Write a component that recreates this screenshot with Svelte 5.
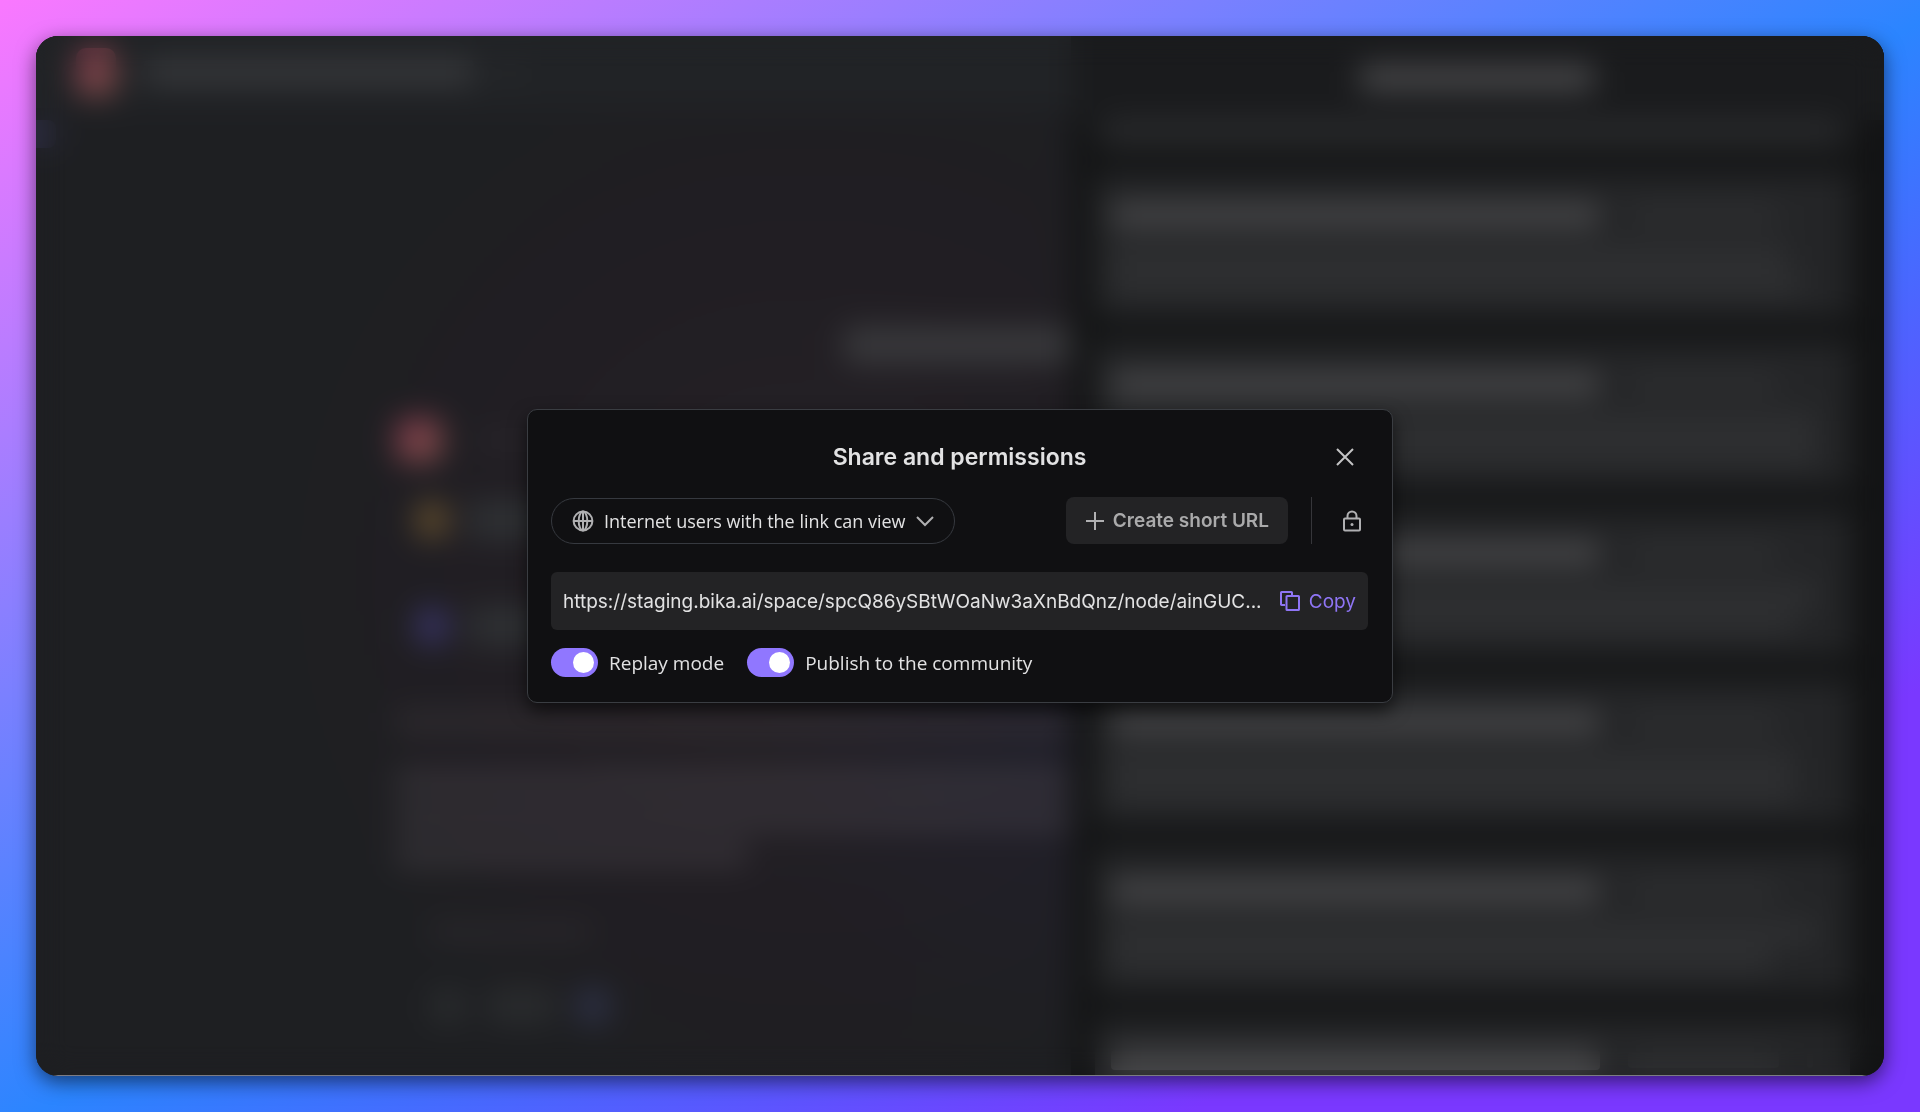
<script>
  let access = $state('public');
  let replayMode = $state(true);
  let published = $state(true);

  const url =
    'https://staging.bika.ai/space/spcQ86ySBtWOaNw3aXnBdQnz/node/ainGUC...';

  // widths of the two preview lines of each history card
  const cards = [
    [94, 96],
    [98, 98],
    [98, 95],
    [95, 95],
    [98, 92],
    [96, 94],
  ];
</script>

<div class="page">
  <div class="window">
    <div class="app" aria-hidden="true">
      <section class="chat">
        <header class="chat-header">
          <span class="avatar"></span>
          <span class="bar heading"></span>
          <span class="bar tiny"></span>
        </header>
        <span class="marker"></span>
        <div class="bubble"></div>
        <div class="thread">
          <div class="row"><span class="avatar large"></span><span class="bar name"></span></div>
          <div class="row step"><span class="dot gold"></span><span class="chip"></span></div>
          <div class="row step second"><span class="dot blue"></span><span class="chip"></span></div>
          <div class="line first"></div>
          <div class="line"></div>
          <div class="line"></div>
          <div class="line short"></div>
          <div class="composer">
            <span class="bar hint"></span>
            <div class="tools">
              <span></span><span class="wide"></span><span class="send"></span>
            </div>
          </div>
        </div>
      </section>
      <aside class="history">
        <div class="history-title"><span class="bar"></span></div>
        <div class="cards">
          <div class="card tail"><span class="preview"></span></div>
          {#each cards as [first, second]}
            <div class="card">
              <div class="card-head">
                <span class="bar title"></span>
                <span class="bar date"></span>
                <span class="bar more"></span>
              </div>
              <span class="preview" style="width: {first}%"></span>
              <span class="preview" style="width: {second}%"></span>
            </div>
          {/each}
        </div>
      </aside>
    </div>

    <div class="overlay">
      <div class="dialog" role="dialog" aria-modal="true" aria-labelledby="share-title">
        <div class="dialog-header">
          <h2 id="share-title">Share and permissions</h2>
          <button class="icon-button close" aria-label="Close">
            <svg width="18" height="18" viewBox="0 0 18 18">
              <path d="M1 1l16 16M17 1L1 17" />
            </svg>
          </button>
        </div>

        <div class="access-row">
          <div class="access">
            <svg width="22" height="22" viewBox="0 0 22 22">
              <circle cx="11" cy="11" r="9.4" />
              <ellipse cx="11" cy="11" rx="4.3" ry="9.4" />
              <path d="M1.6 11h18.8M11 1.6v18.8" />
            </svg>
            <select bind:value={access} aria-label="Who can view">
              <option value="public">Internet users with the link can view</option>
            </select>
            <svg class="chevron" width="18" height="12" viewBox="0 0 18 12">
              <path d="M1 2l8 8 8-8" />
            </svg>
          </div>
          <div class="actions">
            <button class="create">
              <svg width="20" height="20" viewBox="0 0 20 20">
                <path d="M10 1v18M1 10h18" />
              </svg>
              Create short URL
            </button>
            <span class="divider"></span>
            <button class="icon-button lock" aria-label="Password">
              <svg width="20" height="22" viewBox="0 0 20 22">
                <rect x="2" y="8.5" width="16" height="12" rx="1" />
                <path d="M5.5 8.5V6a4.5 4.5 0 0 1 9 0v2.5" />
                <circle class="keyhole" cx="10" cy="14.5" r="1.5" />
              </svg>
            </button>
          </div>
        </div>

        <div class="link-box">
          <input type="text" readonly value={url} aria-label="Share link" />
          <button class="copy">
            <svg width="22" height="22" viewBox="0 0 22 22">
              <path d="M6 15H2.6a.6.6 0 0 1-.6-.6V2.6a.6.6 0 0 1 .6-.6h9.8a.6.6 0 0 1 .6.6V5" />
              <rect x="7.5" y="6" width="12.5" height="14" rx=".6" />
            </svg>
            Copy
          </button>
        </div>

        <div class="switches">
          <label><input type="checkbox" bind:checked={replayMode} />Replay mode</label>
          <label><input type="checkbox" bind:checked={published} />Publish to the community</label>
        </div>
      </div>
    </div>
  </div>
</div>

<style>
  .page {
    display: flex;
    min-height: 100vh;
    box-sizing: border-box;
    padding: 36px;
    background: linear-gradient(to bottom right, #fa78ff, #2b85ff 51%, #7a38ff 81%);
    font-family: Inter, sans-serif;
    color: #e2e2e3;
  }

  .window {
    position: relative;
    display: flex;
    flex: 1;
    overflow: hidden;
    border-radius: 22px;
    background: #1e1f22;
    box-shadow: 0 6px 20px rgba(0, 0, 0, 0.55);
    /* keeps the page gradient out of the overlay's backdrop blur */
    will-change: opacity;
  }

  .app {
    display: flex;
    flex: 1;
    max-height: calc(100vh - 72px);
    overflow: hidden;
  }

  .bar {
    display: block;
    height: 16px;
    border-radius: 4px;
    background: #404043;
  }

  .chat {
    flex: 56 1 0;
    overflow: hidden;
    background:
      radial-gradient(circle at 100% 66%, rgba(32, 34, 52, 0.45), transparent 26%),
      radial-gradient(circle at 75% 52%, #262227, #211e23 35%, #1e1f22 58%);
  }

  .chat-header {
    display: flex;
    align-items: center;
    gap: 28px;
    height: 72px;
    padding-left: 40px;
    background: #212326;
  }

  .avatar {
    width: 40px;
    height: 48px;
    border-radius: 10px;
    background: linear-gradient(135deg, #793349, #7c5148);
  }

  .heading {
    width: 330px;
    height: 24px;
    background: #38393c;
  }

  .tiny {
    width: 16px;
    background: #2b2d2f;
  }

  .marker {
    display: block;
    width: 20px;
    height: 28px;
    margin-top: 12px;
    border-radius: 0 8px 8px 0;
    background: #2c2c40;
  }

  .bubble {
    width: 22%;
    height: 38px;
    margin: 178px 0 0 auto;
    border-radius: 10px 0 0 10px;
    background: #38383b;
  }

  .thread {
    padding: 54px 0 0 360px;
  }

  .row {
    display: flex;
    align-items: center;
    gap: 36px;
    height: 44px;
  }

  .large {
    width: 46px;
    height: 44px;
  }

  .name {
    width: 90px;
    background: #29262b;
  }

  .step {
    gap: 20px;
    padding-left: 20px;
    margin-top: 36px;
  }

  .second {
    margin-top: 62px;
  }

  .dot {
    width: 32px;
    height: 36px;
    border-radius: 10px;
  }

  .gold {
    background: #5f4b2d;
  }

  .blue {
    background: #373363;
  }

  .chip {
    width: 230px;
    height: 40px;
    background: #2e3033;
  }

  .line {
    height: 24px;
    margin-bottom: 12px;
    background: rgba(110, 104, 112, 0.25);
  }

  .first {
    margin: 62px 0 36px;
    background: rgba(100, 88, 92, 0.2);
  }

  .short {
    width: 52%;
  }

  .composer {
    padding: 46px 0 0 34px;
  }

  .hint {
    width: 160px;
    background: #2a282c;
  }

  .tools {
    display: flex;
    gap: 20px;
    margin-top: 48px;
  }

  .tools span {
    width: 36px;
    height: 36px;
    border-radius: 12px;
    background: #292b2d;
  }

  .tools .wide {
    width: 70px;
  }

  .tools .send {
    width: 34px;
    background: #2c3044;
  }

  .history {
    flex: 44 1 0;
    display: flex;
    flex-direction: column;
    overflow: hidden;
    background: #131415;
  }

  .history-title {
    display: flex;
    justify-content: center;
    align-items: center;
    flex: none;
    height: 84px;
    background: #1a1b1d;
  }

  .history-title .bar {
    width: 234px;
    height: 24px;
    background: #4a4a4c;
  }

  .cards {
    flex: 1;
    overflow: hidden;
    padding: 0 34px 0 24px;
  }

  .card {
    height: 144px;
    box-sizing: border-box;
    padding: 32px 20px 0 16px;
    margin-bottom: 25px;
    border-radius: 8px;
    background: #242527;
  }

  .tail {
    height: 28px;
    padding-top: 0;
  }

  .tail .preview {
    background: #2a2b2d;
  }

  .card-head {
    display: flex;
    align-items: center;
    gap: 28px;
    margin-bottom: 22px;
  }

  .card-head .title {
    width: 68%;
    height: 20px;
    background: #4c4c4e;
  }

  .card-head .date {
    width: 21%;
    background: #303133;
  }

  .card-head .more {
    width: 6px;
    background: #2b2c2e;
  }

  .preview {
    display: block;
    height: 18px;
    margin-bottom: 10px;
    background: #323335;
  }

  .overlay {
    position: absolute;
    inset: 0;
    display: flex;
    align-items: center;
    justify-content: center;
    box-shadow: inset 0 -1px #7c7c84;
    backdrop-filter: blur(15px);
  }

  .dialog {
    width: 866px;
    max-width: 90%;
    box-sizing: border-box;
    padding: 24px 24px 25px 23px;
    border: 1px solid #3a3d42;
    border-radius: 10px;
    background: #101012;
    box-shadow: 0 8px 18px rgba(0, 0, 0, 0.6);
  }

  .dialog-header {
    display: grid;
    grid-template-columns: 46px 1fr 46px;
    align-items: center;
    height: 46px;
    margin-bottom: 17px;
  }

  h2 {
    grid-column: 2;
    margin: 0;
    font-size: 23px;
    font-weight: 600;
    line-height: 32px;
    text-align: center;
  }

  button {
    display: flex;
    align-items: center;
    border: 0;
    padding: 0;
    background: none;
    color: inherit;
    font: inherit;
    cursor: pointer;
  }

  svg {
    flex: none;
    fill: none;
    stroke: #b0b0b2;
    stroke-width: 2;
  }

  .icon-button {
    justify-content: center;
    width: 46px;
    height: 46px;
  }

  .close svg {
    stroke: #c4c4c5;
  }

  .access-row {
    display: flex;
    justify-content: space-between;
    align-items: center;
    margin-bottom: 28px;
  }

  .access {
    display: flex;
    align-items: center;
    gap: 10px;
    height: 46px;
    box-sizing: border-box;
    padding: 0 20px;
    border: 1px solid #36393f;
    border-radius: 23px;
  }

  select {
    appearance: none;
    padding: 0;
    border: 0;
    background: none;
    color: inherit;
    font-family: 'Open Sans', sans-serif;
    font-size: 18px;
  }

  .actions {
    display: flex;
    align-items: center;
  }

  .create {
    gap: 8px;
    height: 47px;
    padding: 0 19px;
    border-radius: 8px;
    background: #232325;
    color: #aaaaab;
    font-size: 19px;
    font-weight: 600;
  }

  .divider {
    width: 1px;
    height: 47px;
    margin: 0 24px 0 23px;
    background: #36363a;
  }

  .lock {
    width: 32px;
  }

  .keyhole {
    fill: #b0b0b2;
    stroke: none;
  }

  .link-box {
    display: flex;
    align-items: center;
    gap: 16px;
    height: 58px;
    box-sizing: border-box;
    padding: 0 12px;
    margin-bottom: 18px;
    border-radius: 6px;
    background: #232325;
  }

  .link-box input {
    flex: 1;
    min-width: 0;
    padding: 0;
    border: 0;
    outline: 0;
    background: none;
    color: inherit;
    font: 19px Inter, sans-serif;
    text-overflow: ellipsis;
  }

  .copy {
    gap: 8px;
    color: #8f75f5;
    font-size: 19px;
  }

  .copy svg {
    stroke: #8f75f5;
  }

  .switches {
    display: flex;
    gap: 23px;
  }

  .switches label {
    display: flex;
    align-items: center;
    gap: 11px;
    height: 29px;
    font-family: 'Open Sans', sans-serif;
    font-size: 19px;
  }

  .switches input {
    appearance: none;
    display: flex;
    align-items: center;
    justify-content: flex-start;
    width: 47px;
    height: 29px;
    box-sizing: border-box;
    padding: 0 4px;
    margin: 0;
    border-radius: 15px;
    background: #4a4a50;
  }

  .switches input:checked {
    justify-content: flex-end;
    background: #9077ff;
  }

  .switches input::before {
    content: '';
    width: 21px;
    height: 21px;
    border-radius: 50%;
    background: #fff;
  }
</style>
